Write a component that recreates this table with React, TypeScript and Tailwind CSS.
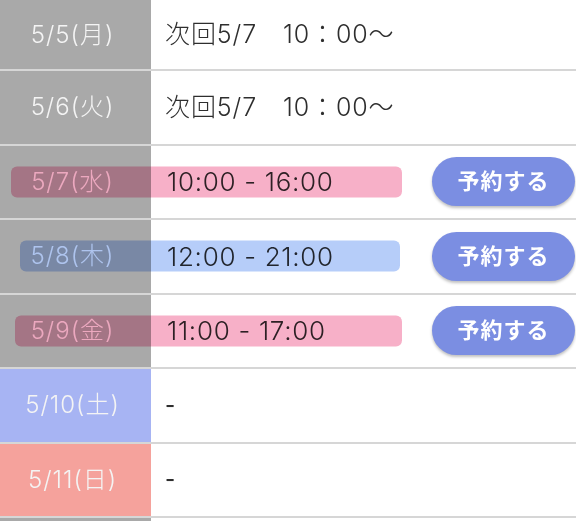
import React from "react";

type Row = {
  date: string;
  dateBg: string;
  text: string;
  time?: boolean;
  bar?: { left: number; right: number; color: string };
};

const rows: Row[] = [
  { date: "5/5(月)", dateBg: "bg-[#a9a9a9]", text: "次回5/7　10：00〜" },
  { date: "5/6(火)", dateBg: "bg-[#a9a9a9]", text: "次回5/7　10：00〜" },
  { date: "5/7(水)", dateBg: "bg-[#a9a9a9]", text: "10:00 - 16:00", time: true, bar: { left: 11, right: 402, color: "bg-[#f7b0c8]" } },
  { date: "5/8(木)", dateBg: "bg-[#a9a9a9]", text: "12:00 - 21:00", time: true, bar: { left: 20, right: 400, color: "bg-[#b6cdf9]" } },
  { date: "5/9(金)", dateBg: "bg-[#a9a9a9]", text: "11:00 - 17:00", time: true, bar: { left: 15, right: 402, color: "bg-[#f7b0c8]" } },
  { date: "5/10(土)", dateBg: "bg-[#a7b4f3]", text: "-" },
  { date: "5/11(日)", dateBg: "bg-[#f5a29c]", text: "-" },
];

const font = { fontFamily: 'Inter, "Noto Sans CJK JP", sans-serif' };

export default function App() {
  return (
    <div className="w-[576px] h-[521px] overflow-hidden bg-white" style={font}>
      {rows.map((r, i) => (
        <div
          key={i}
          className={`relative flex items-stretch border-b-2 border-[#d6d6d6] ${i === 0 ? "h-[71px]" : "h-[74.5px]"}`}
        >
          <div className={`w-[151px] shrink-0 flex items-center justify-center pr-[6px] ${r.dateBg} text-[#f4f4f4] text-[24px] font-light tracking-[1px]`}>
            {r.date}
          </div>
          <div className="flex-1 flex items-center pl-[14px] text-[#2e2e2e]">
            {r.time ? (
              <span className="text-[26px] font-light tracking-[0.7px] pl-[2px]">{r.text}</span>
            ) : r.text === "-" ? (
              <span className="text-[22px] font-medium">-</span>
            ) : (
              <span className="text-[25px] font-light tracking-[0.9px]">{r.text}</span>
            )}
            {r.time && (
              <button className="ml-auto mr-[1px] w-[143px] h-[49px] rounded-full bg-[#7b8ee2] text-white text-[22px] font-semibold tracking-[1px] shadow-[0_2px_3px_rgba(0,0,0,0.25)]">
                予約する
              </button>
            )}
          </div>
          {r.bar && (
            <div
              className={`absolute top-1/2 -translate-y-1/2 h-[31px] rounded-[6px] mix-blend-multiply blur-[0.6px] ${r.bar.color}`}
              style={{ left: r.bar.left, width: r.bar.right - r.bar.left }}
            />
          )}
        </div>
      ))}
      <div className="flex h-[10px]">
        <div className="w-[151px] bg-[#a9a9a9]" />
        <div className="flex-1" />
      </div>
    </div>
  );
}
